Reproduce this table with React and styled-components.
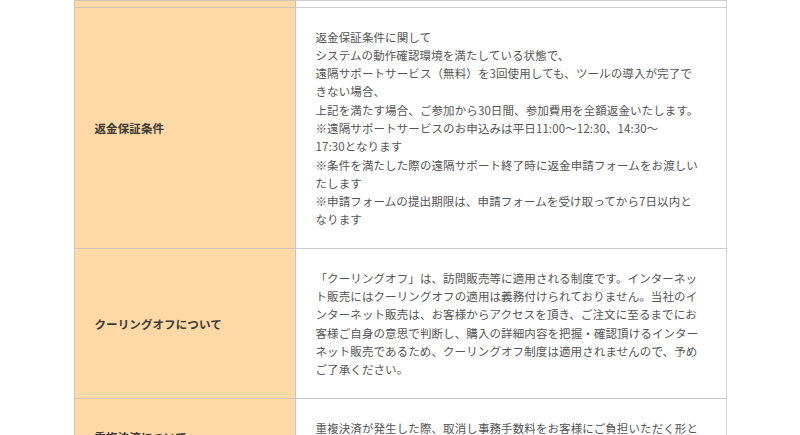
import styled, {createGlobalStyle} from "styled-components";

const GlobalStyle = createGlobalStyle`
    html, body {
        margin: 0;
        padding: 0;
        background: #fff;
    }
    body {
        font-family: "Noto Sans CJK JP", "Noto Sans", sans-serif;
        -webkit-font-smoothing: antialiased;
    }
`;

const rows = [
    {
        title: "返金保証条件",
        lines: [
            "返金保証条件に関して",
            "システムの動作確認環境を満たしている状態で、",
            "遠隔サポートサービス（無料）を3回使用しても、ツールの導入が完了で",
            "きない場合、",
            "上記を満たす場合、ご参加から30日間、参加費用を全額返金いたします。",
            "※遠隔サポートサービスのお申込みは平日11:00〜12:30、14:30〜",
            "17:30となります",
            "※条件を満たした際の遠隔サポート終了時に返金申請フォームをお渡しい",
            "たします",
            "※申請フォームの提出期限は、申請フォームを受け取ってから7日以内と",
            "なります"
        ]
    },
    {
        title: "クーリングオフについて",
        lines: [
            "「クーリングオフ」は、訪問販売等に適用される制度です。インターネッ",
            "ト販売にはクーリングオフの適用は義務付けられておりません。当社のイ",
            "ンターネット販売は、お客様からアクセスを頂き、ご注文に至るまでにお",
            "客様ご自身の意思で判断し、購入の詳細内容を把握・確認頂けるインター",
            "ネット販売であるため、クーリングオフ制度は適用されませんので、予め",
            "ご了承ください。"
        ]
    },
    {
        title: "重複決済について",
        lines: [
            "重複決済が発生した際、取消し事務手数料をお客様にご負担いただく形と",
            "なりますので、予めご了承ください。"
        ]
    }
];

export default function App() {
    return (
        <>
            <GlobalStyle/>
            <Page>
                <Table>
                    <tbody>
                    <tr>
                        <Head $stub/>
                        <Cell $stub/>
                    </tr>
                    {rows.map((row, idx) => {
                        return (
                            <tr key={idx}>
                                <Head>{row.title}</Head>
                                <Cell>
                                    {row.lines.map((line, i) => (
                                        <Line key={i}>{line}</Line>
                                    ))}
                                </Cell>
                            </tr>
                        )
                    })}
                    </tbody>
                </Table>
            </Page>
        </>
    )
}

const Page = styled.div`
    display: flex;
    justify-content: center;
    height: 435px;
    overflow: hidden;
`;

const Table = styled.table`
    width: 653px;
    border-collapse: collapse;
    table-layout: fixed;
    align-self: flex-start;
`;

const Head = styled.th`
    width: 221px;
    box-sizing: border-box;
    background: #fed9a7;
    border: 1px solid #cfc5b6;
    padding: ${({$stub}) => ($stub ? "0" : "0 20px")};
    height: ${({$stub}) => ($stub ? "6px" : "auto")};
    text-align: left;
    vertical-align: middle;
    font-size: 11.5px;
    font-weight: 700;
    color: #3d3a36;
    letter-spacing: 0.1px;
`;

const Cell = styled.td`
    background: #fff;
    border: 1px solid #cccccc;
    border-right-color: #d4d4d4;
    padding: ${({$stub}) => ($stub ? "0" : "19.5px 20px")};
    height: ${({$stub}) => ($stub ? "6px" : "auto")};
    vertical-align: middle;
    font-size: 11.5px;
    line-height: 18.3px;
    color: #555;
    letter-spacing: 0.1px;
`;

const Line = styled.div`
    white-space: nowrap;
`;
